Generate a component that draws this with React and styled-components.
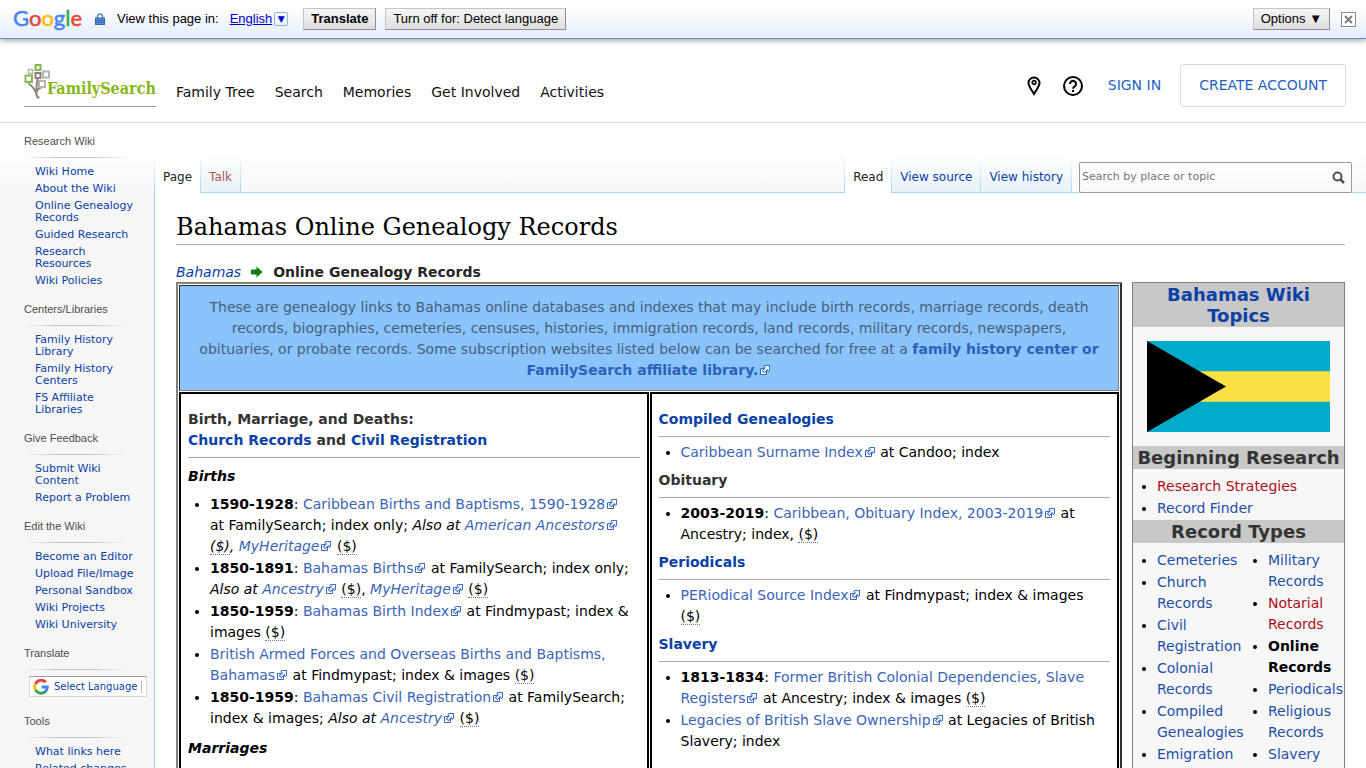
import React from "react";
import styled, { createGlobalStyle, css } from "styled-components";

const SANS = '"DejaVu Sans", Verdana, sans-serif';
const ARIAL = '"Liberation Sans", Arial, sans-serif';
const LINK = "#0b41a6";
const EXTERNAL = "#3a65b8";
const MISSING = "#ad0f1c";
const TAB_LINE = "#a7d7f9";

const GlobalStyle = createGlobalStyle`
  html { scrollbar-width: none; }
  body { margin: 0; background: #f6f6f6; color: #000; font: 14px/21px ${SANS}; }
  *, *::before, *::after { box-sizing: border-box; }
  a { color: ${LINK}; text-decoration: none; }
  a:hover { text-decoration: underline; }
  h1, h2, h3, h4, p, ul { margin: 0; padding: 0; }
`;

/* ---------- translate bar ---------- */
const TranslateBar = styled.div`
  position: relative;
  display: flex;
  align-items: center;
  height: 39px;
  padding: 0 10px 0 13px;
  background: linear-gradient(#fff 20%, #e2edfb);
  border-bottom: 1px solid #6b8fd6;
  box-shadow: 0 1px 6px rgba(0, 0, 0, 0.45);
  font: 13px/16px ${ARIAL};
`;
const GoogleWord = styled.span`
  width: 82px;
  margin-top: -2px;
  font: 22px/28px Lato, ${ARIAL};
  -webkit-text-stroke: 0.5px currentColor;
`;
const Letter = styled.span`
  color: ${(p) => p.$color};
`;
const BarText = styled.span`
  margin-left: 12px;
`;
const LangPicker = styled.a`
  display: flex;
  align-items: center;
  gap: 2px;
  margin: 0 15px 0 11px;
  color: #0000cc;
  span { text-decoration: underline; }
  i {
    width: 14px;
    height: 14px;
    border: 1px solid #8fb0de;
    border-radius: 2px;
    font: 9px/12px ${SANS};
    text-align: center;
  }
`;
const BarButton = styled.button`
  height: 22px;
  padding: 0 7px;
  margin-right: 9px;
  border: 1px solid;
  border-color: #c4c4c4 #8f8f8f #8f8f8f #c4c4c4;
  background: linear-gradient(#f6f6f6, #dedede);
  color: #000;
  font: ${(p) => (p.$strong ? "bold" : "normal")} 13px/16px ${ARIAL};
`;
const Spacer = styled.div`
  flex: 1;
`;
const CloseButton = styled.button`
  display: grid;
  place-items: center;
  width: 15px;
  height: 15px;
  margin-left: 2px;
  padding: 0;
  border: 1px solid #8a8a8a;
  background: #fff;
`;

/* ---------- site header ---------- */
const SiteHeader = styled.header`
  display: flex;
  align-items: flex-start;
  height: 84px;
  padding: 0 20px 0 24px;
  background: #fff;
  border-bottom: 1px solid #ddd;
`;
const Logo = styled.a`
  display: flex;
  width: 132px;
  height: 43px;
  margin: 25px 20px 0 0;
  border-bottom: 1px solid #999;
  &:hover { text-decoration: none; }
  svg { flex: none; }
  span {
    margin: 15px 0 0 -5px;
    color: #86b817;
    font: bold 16px/20px "DejaVu Serif Condensed", "DejaVu Serif", serif;
  }
`;
const MainNav = styled.nav`
  display: flex;
  gap: 20px;
  margin-top: 43px;
  a { color: #111; }
`;
const HeaderTools = styled.div`
  display: flex;
  align-items: center;
  margin-top: 25px;
`;
const HeaderLink = styled.a`
  margin: 0 19px 0 24px;
  color: #1f5fc8;
`;
const IconLink = styled.a`
  display: flex;
  margin-left: ${(p) => p.$gap || 0}px;
`;
const CreateButton = styled.button`
  height: 43px;
  padding: 0 18px;
  border: 1px solid #ddd;
  border-radius: 3px;
  background: #fff;
  color: #1f5fc8;
  font: 14px/21px ${SANS};
`;

/* ---------- page frame ---------- */
const Frame = styled.div`
  display: flex;
  background: linear-gradient(#fff 20px, #f6f6f6 80px);
  background-size: 100% 80px;
  background-repeat: no-repeat;
`;
const Sidebar = styled.aside`
  flex: none;
  width: 154px;
  padding: 12px 19px 0 24px;
`;
const SideSection = styled.section`
  margin-bottom: 16px;
  h3 {
    padding-bottom: 11px;
    background: linear-gradient(90deg, transparent, #c4c4c4 30%, #c4c4c4 60%, transparent 95%)
      bottom / 100% 1px no-repeat;
    color: #4d4d4d;
    font: 11px/12px ${ARIAL};
  }
  ul { padding: 8px 0 0 11px; list-style: none; font-size: 11px; line-height: 12px; }
  li + li { margin-top: 5px; }
`;
const LanguageSelect = styled.a`
  display: flex;
  align-items: center;
  gap: 5px;
  width: 118px;
  height: 21px;
  margin: 6px -12px 18px 5px;
  padding-left: 3px;
  border: 1px solid #d5d5d5;
  border-top-color: #9b9b9b;
  background: #fff;
  font: 10px/19px ${SANS};
  white-space: nowrap;
  span { padding-right: 4px; border-right: 1px solid #bbb; line-height: 12px; }
`;
const Column = styled.div`
  flex: 1;
  min-width: 0;
`;
const TabRow = styled.div`
  display: flex;
  align-items: flex-end;
  height: 69px;
  padding-right: 14px;
`;
const Tabs = styled.nav`
  display: flex;
  position: relative;
  height: 40px;
  margin-bottom: -1px;
`;
const Tab = styled.a`
  padding: 15px 8px 0;
  border: 0 solid;
  border-left-width: 1px;
  border-image: linear-gradient(#fff, ${TAB_LINE}) 1;
  background: ${(p) => (p.$active ? "#fff" : "linear-gradient(#fff, #e8f2f9)")};
  color: ${(p) => (p.$active ? "#222" : p.$missing ? "#a55858" : LINK)};
  font-size: 12px;
  line-height: 18px;
  ${(p) => !p.$active && css`margin-bottom: 1px;`}
  &:last-child { border-right-width: 1px; }
`;
const SearchBox = styled.form`
  display: flex;
  align-items: center;
  width: 273px;
  height: 31px;
  margin: 0 0 -1px 7px;
  position: relative;
  border: 1px solid #999;
  border-radius: 2px;
  background: linear-gradient(#fff, #f8f8f8);
  input {
    flex: 1;
    min-width: 0;
    padding: 0 2px 2px;
    border: 0;
    background: none;
    font: 11px/16px ${SANS};
    &::placeholder { color: #757575; opacity: 1; }
  }
  button { display: flex; padding: 0 6px; border: 0; background: none; }
`;
const Content = styled.main`
  padding: 18px 21px 0;
  border: 1px solid ${TAB_LINE};
  border-width: 1px 0 0 1px;
  background: #fff;
`;
const Title = styled.h1`
  margin-bottom: 16px;
  border-bottom: 1px solid #aaa;
  font: 24px/33px "DejaVu Serif", serif;
`;
const Crumbs = styled.nav`
  display: flex;
  align-items: center;
  gap: 10px;
  padding-top: 1px;
  line-height: 20px;
  b { color: #252525; }
`;
const Columns = styled.div`
  display: flex;
  align-items: flex-start;
  gap: 10px;
`;

/* ---------- record table ---------- */
const Records = styled.div`
  flex: 1;
  min-width: 0;
`;
const RecordTable = styled.table`
  width: 100%;
  table-layout: fixed;
  border: 2px solid;
  border-color: #808080 #303030 #303030 #808080;
  border-spacing: 1px;
  font-size: 14px;
`;
const NoteCell = styled.td`
  padding: 11px 17px 9px;
  border: 1px solid;
  border-color: #2c2c2c #808080 #808080 #2c2c2c;
  background: #8ac4fb;
  color: #46607b;
  text-align: center;
  a { color: #2b62b8; font-weight: bold; }
`;
const RecordCell = styled.td`
  padding: 9px 7px 60px;
  border: 2px solid #000;
  vertical-align: top;
`;
const Heading = styled.h3`
  padding: 6px 0;
  border-bottom: 1px solid #aaa;
  color: #333;
  font: bold 14px/21px ${SANS};
`;
const SubHeading = styled.h4`
  padding: 8px 0 2px;
  font: italic bold 14px/21px ${SANS};
`;
const RecordList = styled.ul`
  margin-top: 5px;
  padding-left: 22px;
  li { margin-bottom: 1px; }
`;
const ExternalLink = styled.a`
  color: ${EXTERNAL};
  svg { margin-left: 1px; vertical-align: -1px; }
`;
const Fee = styled.abbr`
  text-decoration: none;
  border-bottom: 1px dotted #777;
  line-height: 16px;
`;

/* ---------- topics box ---------- */
const TopicsBox = styled.aside`
  flex: none;
  width: 213px;
  padding-bottom: 40px;
  border: 1px solid #808080;
  background: #f7f7f7;
  h2 {
    padding: 1px 0;
    background: #c8c8c8;
    color: #333;
    font: bold 18px/21px ${SANS};
    text-align: center;
    white-space: nowrap;
  }
  svg { display: block; width: 100%; padding: 14px; }
`;
const TopicLists = styled.div`
  display: grid;
  grid-template-columns: ${(p) => (p.$split ? "111px 1fr" : "1fr")};
  padding-top: 7px;
  ul { padding-left: 24px; }
  li { margin-bottom: 1px; }
`;
const TopicLink = styled.a`
  color: ${(p) => (p.$missing ? MISSING : "#1d4fa8")};
`;

const Ext = ({ children }) => (
  <ExternalLink href="#">
    {children}
    <svg width="12" height="12" viewBox="0 0 12 12" aria-hidden="true">
      <path fill="#fff" stroke="#3a65b8" d="M1.5 4.5h6v6h-6z" />
      <path fill="#3a70d0" d="M5.765 1H11v5.39L9.427 7.937l-1.31-1.31L5.393 9.35l-2.69-2.688 2.81-2.808L4.2 2.544z" />
      <path fill="#fff" d="M9.995 2.004l.022 4.885L8.2 5.07 5.32 7.95 4.09 6.723l2.882-2.88-1.85-1.852z" />
    </svg>
  </ExternalLink>
);
const Dollar = () => <Fee title="Fee required">($)</Fee>;

const GOOGLE = [
  ["G", "#4285f4"], ["o", "#ea4335"], ["o", "#fbbc05"],
  ["g", "#4285f4"], ["l", "#34a853"], ["e", "#ea4335"],
];

const SIDE = [
  ["Research Wiki", ["Wiki Home", "About the Wiki", "Online Genealogy Records", "Guided Research", "Research Resources", "Wiki Policies"]],
  ["Centers/Libraries", ["Family History Library", "Family History Centers", "FS Affiliate Libraries"]],
  ["Give Feedback", ["Submit Wiki Content", "Report a Problem"]],
  ["Edit the Wiki", ["Become an Editor", "Upload File/Image", "Personal Sandbox", "Wiki Projects", "Wiki University"]],
];

const SideGroup = ({ title, items }) => (
  <SideSection>
    <h3>{title}</h3>
    <ul>
      {items.map((t) => (
        <li key={t}><a href="#">{t}</a></li>
      ))}
    </ul>
  </SideSection>
);

const TopicList = ({ items }) => (
  <ul>
    {items.map(([t, kind]) => (
      <li key={t}>
        {kind === "here" ? <b>{t}</b> : <TopicLink href="#" $missing={kind === "missing"}>{t}</TopicLink>}
      </li>
    ))}
  </ul>
);

const TreeMark = () => (
  <svg width="28" height="36" viewBox="0 0 28 36" fill="none" aria-hidden="true">
    <path d="M15.500 33.500h-2C12 27 10 23 4.500 19.500M12.500 28C12 22 13 19 13.500 15M12.500 29C12.500 26 15 24 18 23" stroke="#8b847b" strokeWidth="2" />
    <g fill="#fff" strokeWidth="2">
      <path d="M11.500 1h5v5h-5z" stroke="#86b84a" />
      <path d="M4.500 5.500h4v4h-4z" stroke="#b5b3ae" strokeWidth="1.500" />
      <path d="M11.500 9h5v5h-5z" stroke="#8b847b" />
      <path d="M19 7.500h6v6h-6z" stroke="#b5b3ae" />
      <path d="M1.500 11.500h6.500v6.500H1.500z" stroke="#86b84a" />
      <path d="M15 17h6v6h-6z" stroke="#b5b3ae" />
    </g>
  </svg>
);

export default function App() {
  return (
    <>
      <GlobalStyle />
      <TranslateBar>
        <GoogleWord>
          {GOOGLE.map(([c, color], i) => <Letter key={i} $color={color}>{c}</Letter>)}
        </GoogleWord>
        <svg width="10" height="12" viewBox="0 0 10 12" aria-hidden="true">
          <path d="M2.500 6V3.500a2.500 2.500 0 0 1 5 0V6" fill="none" stroke="#5b87c0" strokeWidth="1.500" />
          <rect x="0.500" y="5" width="9" height="6.500" fill="#5b8fd6" stroke="#2f63b0" />
          <path d="M1 7.500h8M1 9.500h8" stroke="#2f63b0" />
        </svg>
        <BarText>View this page in:</BarText>
        <LangPicker href="#"><span>English</span><i>▼</i></LangPicker>
        <BarButton $strong>Translate</BarButton>
        <BarButton>Turn off for: Detect language</BarButton>
        <Spacer />
        <BarButton>Options ▼</BarButton>
        <CloseButton aria-label="Close">
          <svg width="9" height="9" viewBox="0 0 9 9" aria-hidden="true">
            <path d="M1 1l7 7M8 1L1 8" stroke="#7d7d7d" strokeWidth="2" />
          </svg>
        </CloseButton>
      </TranslateBar>

      <SiteHeader>
        <Logo href="#"><TreeMark /><span>FamilySearch</span></Logo>
        <MainNav>
          {["Family Tree", "Search", "Memories", "Get Involved", "Activities"].map((t) => (
            <a key={t} href="#">{t}</a>
          ))}
        </MainNav>
        <Spacer />
        <HeaderTools>
          <IconLink href="#" aria-label="Locations">
            <svg width="14" height="20" viewBox="0 0 14 20" fill="none" stroke="#000" aria-hidden="true">
              <path d="M7 18C4 13 1.500 10 1.500 7a5.500 5.500 0 0 1 11 0c0 3-2.500 6-5.500 11z" strokeWidth="2" />
              <circle cx="7" cy="6.500" r="1.800" strokeWidth="1.700" />
            </svg>
          </IconLink>
          <IconLink href="#" aria-label="Help" $gap={21}>
            <svg width="22" height="22" viewBox="0 0 22 22" fill="none" stroke="#000" strokeWidth="2" aria-hidden="true">
              <circle cx="11" cy="11" r="9" />
              <path d="M8 9a3 3 0 1 1 4.800 2.300C11.600 12 11 12.500 11 13.700M11 15v2" />
            </svg>
          </IconLink>
          <HeaderLink href="#">SIGN IN</HeaderLink>
          <CreateButton>CREATE ACCOUNT</CreateButton>
        </HeaderTools>
      </SiteHeader>

      <Frame>
        <Sidebar>
          {SIDE.map(([title, items]) => <SideGroup key={title} title={title} items={items} />)}
          <SideSection>
            <h3>Translate</h3>
            <LanguageSelect href="#">
              <svg width="16" height="16" viewBox="0 0 14 14" fill="none" strokeWidth="2.600" aria-hidden="true">
                <path d="M11.200 2.900A5.500 5.500 0 0 0 2.200 4.300" stroke="#ea4335" />
                <path d="M2.200 4.300a5.500 5.500 0 0 0 0 5.400" stroke="#fbbc05" />
                <path d="M2.200 9.700a5.500 5.500 0 0 0 8.600 1.300" stroke="#34a853" />
                <path d="M10.800 11A5.500 5.500 0 0 0 12.500 7H7.500" stroke="#4285f4" />
              </svg>
              <span>Select Language</span>
            </LanguageSelect>
          </SideSection>
          <SideGroup title="Tools" items={["What links here", "Related changes"]} />
        </Sidebar>

        <Column>
          <TabRow>
            <Tabs aria-label="Namespaces">
              <Tab href="#" $active>Page</Tab>
              <Tab href="#" $missing>Talk</Tab>
            </Tabs>
            <Spacer />
            <Tabs aria-label="Views">
              <Tab href="#" $active>Read</Tab>
              <Tab href="#">View source</Tab>
              <Tab href="#">View history</Tab>
            </Tabs>
            <SearchBox>
              <input type="text" aria-label="Search" placeholder="Search by place or topic" />
              <button type="button" aria-label="Go">
                <svg width="13" height="13" viewBox="0 0 13 13" fill="none" stroke="#4f4f4f" aria-hidden="true">
                  <circle cx="5.500" cy="5.500" r="4" strokeWidth="2" />
                  <path d="M8.500 8.500l3.500 3.500" strokeWidth="2.500" />
                </svg>
              </button>
            </SearchBox>
          </TabRow>

          <Content>
            <Title>Bahamas Online Genealogy Records</Title>
            <Crumbs aria-label="Breadcrumb">
              <a href="#"><i>Bahamas</i></a>
              <svg width="12" height="12" viewBox="0 0 12 12" aria-hidden="true">
                <path d="M0 3.500h5.500V0.500L11.500 6l-6 5.500V8.500H0z" fill="#078207" />
              </svg>
              <b>Online Genealogy Records</b>
            </Crumbs>
            <Columns>
              <Records>
                <RecordTable>
                  <tbody>
                    <tr>
                      <NoteCell colSpan={2}>
                        These are genealogy links to Bahamas online databases and indexes that may include birth records, marriage records, death records, biographies, cemeteries, censuses, histories, immigration records, land records, military records, newspapers, obituaries, or probate records. Some subscription websites listed below can be searched for free at a <Ext>family history center or FamilySearch affiliate library.</Ext>
                      </NoteCell>
                    </tr>
                    <tr>
                      <RecordCell>
                        <Heading>
                          Birth, Marriage, and Deaths:<br />
                          <a href="#">Church Records</a> and <a href="#">Civil Registration</a>
                        </Heading>
                        <SubHeading>Births</SubHeading>
                        <RecordList>
                          <li><b>1590-1928</b>: <Ext>Caribbean Births and Baptisms, 1590-1928</Ext> at&nbsp;FamilySearch; index only; <i>Also at <Ext>American Ancestors</Ext> <Dollar />, <Ext>MyHeritage</Ext></i> <Dollar /></li>
                          <li><b>1850-1891</b>: <Ext>Bahamas Births</Ext> at FamilySearch; index only; <i>Also at <Ext>Ancestry</Ext></i> <Dollar />, <i><Ext>MyHeritage</Ext></i> <Dollar /></li>
                          <li><b>1850-1959</b>: <Ext>Bahamas Birth Index</Ext> at Findmypast; index &amp; images <Dollar /></li>
                          <li><Ext>British Armed Forces and Overseas Births and Baptisms, Bahamas</Ext> at Findmypast; index &amp; images <Dollar /></li>
                          <li><b>1850-1959</b>: <Ext>Bahamas Civil Registration</Ext> at FamilySearch; index &amp; images; <i>Also at <Ext>Ancestry</Ext></i> <Dollar /></li>
                        </RecordList>
                        <SubHeading>Marriages</SubHeading>
                      </RecordCell>
                      <RecordCell>
                        <Heading><a href="#">Compiled Genealogies</a></Heading>
                        <RecordList>
                          <li><Ext>Caribbean Surname Index</Ext> at Candoo; index</li>
                        </RecordList>
                        <Heading>Obituary</Heading>
                        <RecordList>
                          <li><b>2003-2019</b>: <Ext>Caribbean, Obituary Index, 2003-2019</Ext> at Ancestry; index, <Dollar /></li>
                        </RecordList>
                        <Heading><a href="#">Periodicals</a></Heading>
                        <RecordList>
                          <li><Ext>PERiodical Source Index</Ext> at Findmypast; index &amp; images<br /><Dollar /></li>
                        </RecordList>
                        <Heading><a href="#">Slavery</a></Heading>
                        <RecordList>
                          <li><b>1813-1834</b>: <Ext>Former British Colonial Dependencies, Slave Registers</Ext> at Ancestry; index &amp; images <Dollar /></li>
                          <li><Ext>Legacies of British Slave Ownership</Ext> at Legacies of British Slavery; index</li>
                        </RecordList>
                      </RecordCell>
                    </tr>
                  </tbody>
                </RecordTable>
              </Records>

              <TopicsBox>
                <h2><a href="#">Bahamas Wiki<br />Topics</a></h2>
                <svg viewBox="0 0 183 91" preserveAspectRatio="none" role="img" aria-label="Flag of the Bahamas">
                  <path fill="#00abc9" d="M0 0h183v91H0z" />
                  <path fill="#fae042" d="M0 30.300h183v30.400H0z" />
                  <path d="M0 0l79 45.500L0 91z" />
                </svg>
                <h2>Beginning Research</h2>
                <TopicLists>
                  <TopicList items={[["Research Strategies", "missing"], ["Record Finder"]]} />
                </TopicLists>
                <h2>Record Types</h2>
                <TopicLists $split>
                  <TopicList items={[["Cemeteries"], ["Church Records"], ["Civil Registration"], ["Colonial Records"], ["Compiled Genealogies"], ["Emigration"]]} />
                  <TopicList items={[["Military Records"], ["Notarial Records", "missing"], ["Online Records", "here"], ["Periodicals"], ["Religious Records"], ["Slavery"]]} />
                </TopicLists>
              </TopicsBox>
            </Columns>
          </Content>
        </Column>
      </Frame>
    </>
  );
}
